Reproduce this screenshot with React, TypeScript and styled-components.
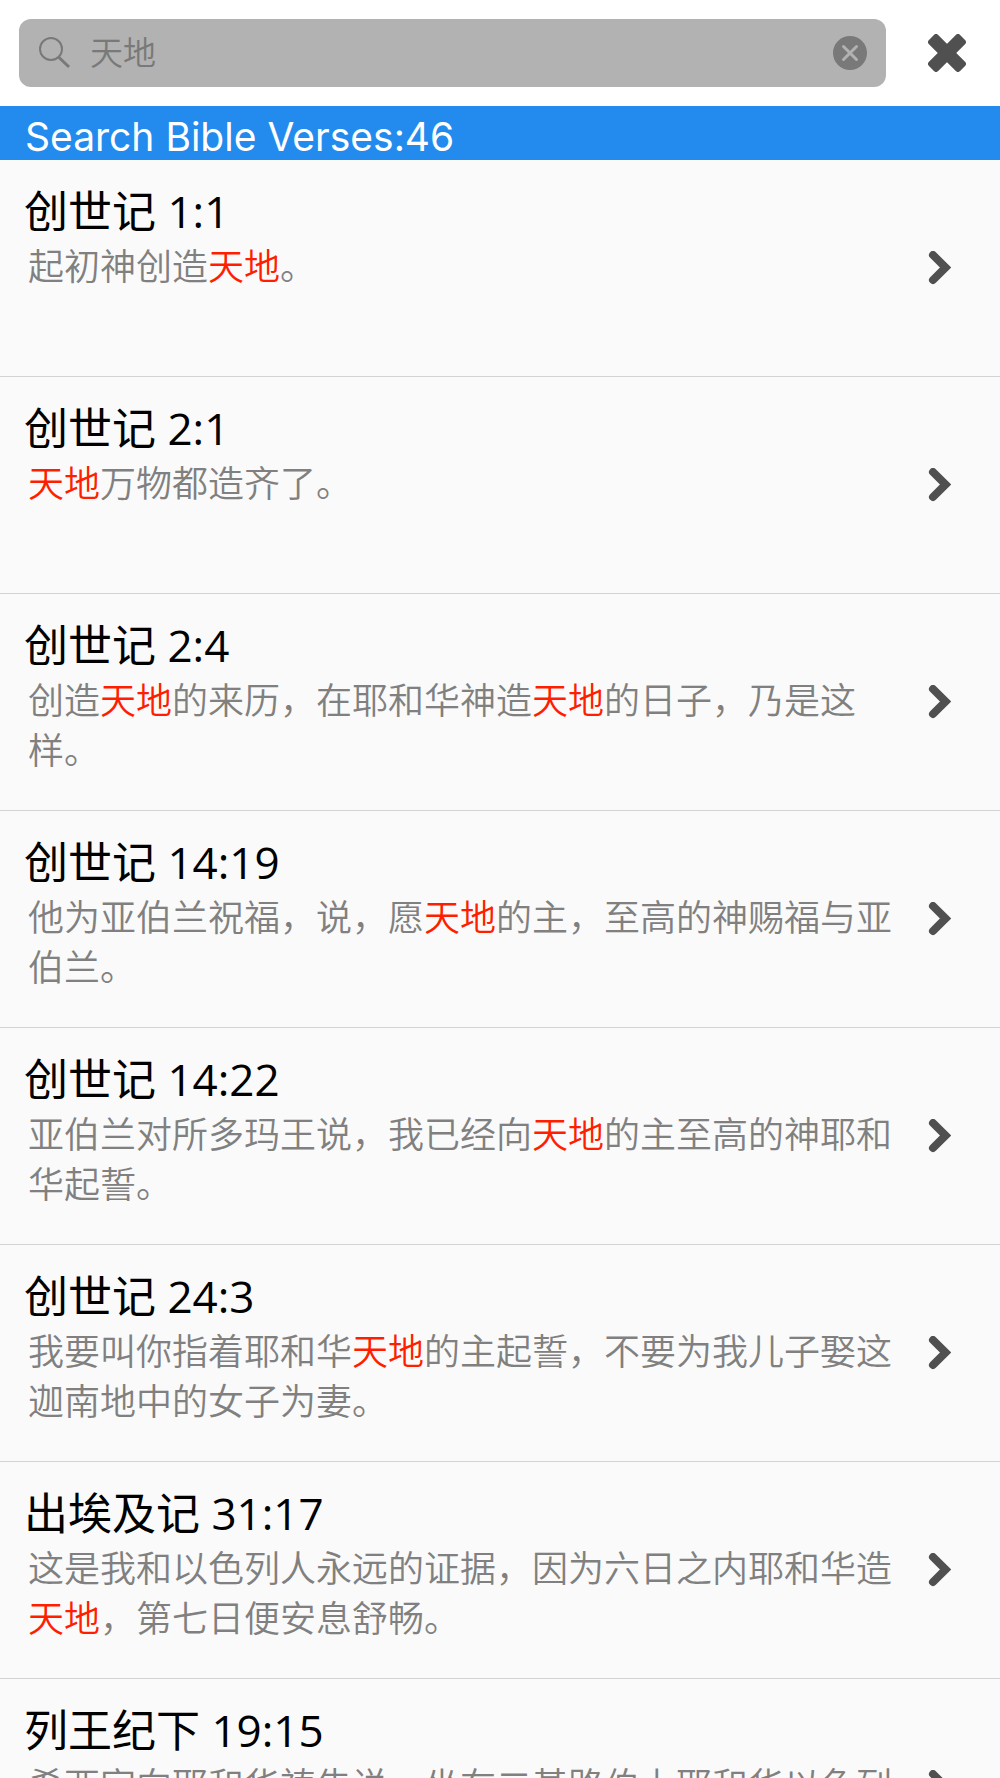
import React, { useState } from "react";
import styled, { createGlobalStyle } from "styled-components";

const GlobalStyle = createGlobalStyle`
  *, *::before, *::after { box-sizing: border-box; }
  body {
    margin: 0;
    background: #ffffff;
    font-family: "Open Sans", "Noto Sans CJK SC", sans-serif;
  }
`;

const Screen = styled.main`
  display: flex;
  flex-direction: column;
  height: 100vh;
  overflow: hidden;
`;

const TopBar = styled.header`
  display: flex;
  align-items: center;
  flex: none;
  gap: 42px;
  padding: 19px 34px 19px 19px;
`;

const SearchBox = styled.form`
  display: flex;
  align-items: center;
  flex: 1;
  gap: 18px;
  height: 68px;
  padding: 0 19px;
  border-radius: 12px;
  background: #b2b2b2;
  color: #797979;
`;

const SearchInput = styled.input`
  flex: 1;
  min-width: 0;
  padding: 0 0 4px;
  border: 0;
  outline: 0;
  background: transparent;
  color: #797979;
  font-family: "Noto Sans CJK SC", sans-serif;
  font-size: 33px;
  font-weight: 350;
  line-height: 48px;
`;

const IconButton = styled.button`
  display: flex;
  flex: none;
  padding: 0;
  border: 0;
  background: transparent;
  color: inherit;
`;

const CloseButton = styled(IconButton)`
  color: #505050;
`;

const ResultCount = styled.h1`
  flex: none;
  margin: 0;
  padding: 8px 25px 0;
  background: #228bed;
  color: #ffffff;
  font-family: Inter, sans-serif;
  font-size: 39px;
  font-weight: 400;
  line-height: 46px;
`;

const ResultList = styled.ul`
  flex: 1;
  min-height: 0;
  margin: 0;
  padding: 0;
  overflow-y: auto;
  scrollbar-width: none;
  list-style: none;
  background: #fafafa;
`;

const ResultLink = styled.a`
  display: flex;
  align-items: center;
  height: 217px;
  padding: 0 49px 0 24px;
  border-bottom: 1px solid #d1d3d4;
  color: #505050;
  text-decoration: none;
`;

const VerseText = styled.div`
  flex: 1;
  align-self: flex-start;
  min-width: 0;
  padding: 23px 28px 0 0;
`;

const Reference = styled.h2`
  margin: 0;
  color: #000000;
  font-size: 44px;
  font-weight: 400;
  line-height: 56px;
`;

const Passage = styled.p`
  margin: 3px 0 0;
  padding-left: 4px;
  color: #808080;
  font-size: 36px;
  font-weight: 350;
  line-height: 50px;
`;

const Match = styled.mark`
  background: transparent;
  color: #ff1e00;
`;

const keyword = "天地";

const verses = [
  { title: "创世记 1:1", text: "起初神创造天地。" },
  { title: "创世记 2:1", text: "天地万物都造齐了。" },
  { title: "创世记 2:4", text: "创造天地的来历，在耶和华神造天地的日子，乃是这样。" },
  { title: "创世记 14:19", text: "他为亚伯兰祝福，说，愿天地的主，至高的神赐福与亚伯兰。" },
  { title: "创世记 14:22", text: "亚伯兰对所多玛王说，我已经向天地的主至高的神耶和华起誓。" },
  { title: "创世记 24:3", text: "我要叫你指着耶和华天地的主起誓，不要为我儿子娶这迦南地中的女子为妻。" },
  { title: "出埃及记 31:17", text: "这是我和以色列人永远的证据，因为六日之内耶和华造天地，第七日便安息舒畅。" },
  { title: "列王纪下 19:15", text: "希西家向耶和华祷告说，坐在二基路伯上耶和华以色列的神，你曾创造天地。" },
];

const SearchIcon = () => (
  <svg width="34" height="34" viewBox="0 0 34 34" fill="none" stroke="currentColor" aria-hidden="true">
    <circle cx="13" cy="13" r="11" strokeWidth="2" />
    <path d="M20.5 21 31 31" strokeWidth="3" />
  </svg>
);

const ClearIcon = () => (
  <svg width="34" height="34" viewBox="0 0 34 34" aria-hidden="true">
    <circle cx="17" cy="17" r="17" fill="currentColor" />
    <path d="m10.5 10.5 13 13m0-13-13 13" stroke="#b2b2b2" strokeWidth="3" strokeLinecap="round" />
  </svg>
);

const CloseIcon = () => (
  <svg width="38" height="38" viewBox="0 0 38 38" fill="currentColor" aria-hidden="true">
    <g transform="rotate(45 19 19)">
      <rect x="-3" y="12.5" width="44" height="13" rx="3" />
      <rect x="12.5" y="-3" width="13" height="44" rx="3" />
    </g>
  </svg>
);

const ChevronIcon = () => (
  <svg width="23" height="34" viewBox="0 0 23 34" fill="none" aria-hidden="true">
    <path d="M5 4 17.5 16.5 5 29" stroke="currentColor" strokeWidth="8" strokeLinecap="round" />
  </svg>
);

function Highlighted({ text }: { text: string }) {
  return (
    <>
      {text.split(keyword).map((part, index) => (
        <React.Fragment key={index}>
          {index > 0 && <Match>{keyword}</Match>}
          {part}
        </React.Fragment>
      ))}
    </>
  );
}

export default function App() {
  const [query, setQuery] = useState(keyword);

  return (
    <>
      <GlobalStyle />
      <Screen lang="zh-CN">
        <TopBar>
          <SearchBox role="search" onSubmit={(event) => event.preventDefault()}>
            <SearchIcon />
            <SearchInput
              aria-label="Search"
              value={query}
              onChange={(event) => setQuery(event.target.value)}
            />
            <IconButton type="button" aria-label="Clear" onClick={() => setQuery("")}>
              <ClearIcon />
            </IconButton>
          </SearchBox>
          <CloseButton type="button" aria-label="Close">
            <CloseIcon />
          </CloseButton>
        </TopBar>
        <ResultCount>Search Bible Verses:46</ResultCount>
        <ResultList>
          {verses.map((verse) => (
            <li key={verse.title}>
              <ResultLink href="#">
                <VerseText>
                  <Reference>{verse.title}</Reference>
                  <Passage>
                    <Highlighted text={verse.text} />
                  </Passage>
                </VerseText>
                <ChevronIcon />
              </ResultLink>
            </li>
          ))}
        </ResultList>
      </Screen>
    </>
  );
}
